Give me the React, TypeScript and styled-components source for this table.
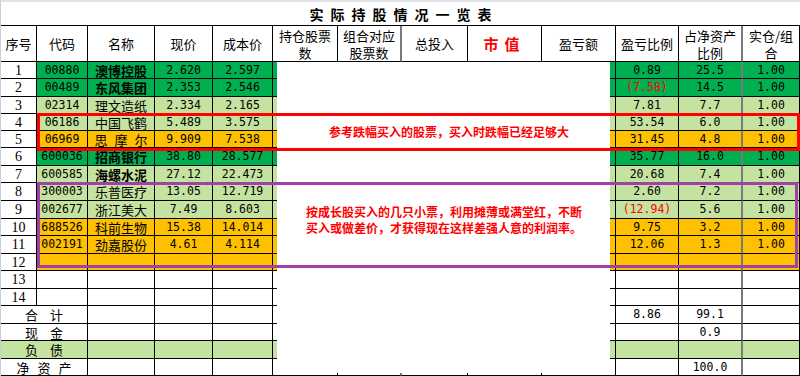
import styled, { createGlobalStyle } from 'styled-components';

const GREEN = '#00b050';
const LIGHT = '#c4e3a0';
const GOLD = '#ffc000';
const CJK = `"Noto Sans CJK SC", "Noto Sans", sans-serif`;
const NUM = `"DejaVu Sans Mono", "Liberation Mono", monospace`;

type Fill = 'dark' | 'light' | 'gold' | 'none';
type Face = 'cjk' | 'num' | 'serif';

const fillColor = (f?: Fill) =>
  f === 'dark' ? GREEN : f === 'light' ? LIGHT : f === 'gold' ? GOLD : '#fff';

const COLS = [36, 51, 67, 58, 60, 65, 64, 66, 74, 74, 63, 64, 57];
const ROWS = [17, 18, 17, 17, 17, 18, 17, 18, 18, 17, 18, 17, 18, 17, 18, 17, 18, 17];
// columns whose right edge is drawn as a thick grey rule
const THICK = [6, 11];

interface Stock {
  no: number;
  code?: string;
  name?: string;
  bold?: boolean;
  spaced?: boolean;
  price?: string;
  cost?: string;
  pct?: string;
  loss?: boolean;
  share?: string;
  ratio?: string;
  fill: Fill;
}

const stocks: Stock[] = [
  { no: 1, code: '00880', name: '澳博控股', bold: true, price: '2.620', cost: '2.597', pct: '0.89', share: '25.5', ratio: '1.00', fill: 'dark' },
  { no: 2, code: '00489', name: '东风集团', bold: true, price: '2.353', cost: '2.546', pct: '(7.58)', loss: true, share: '14.5', ratio: '1.00', fill: 'dark' },
  { no: 3, code: '02314', name: '理文造纸', price: '2.334', cost: '2.165', pct: '7.81', share: '7.7', ratio: '1.00', fill: 'light' },
  { no: 4, code: '06186', name: '中国飞鹤', price: '5.489', cost: '3.575', pct: '53.54', share: '6.0', ratio: '1.00', fill: 'light' },
  { no: 5, code: '06969', name: '思摩尔', spaced: true, price: '9.909', cost: '7.538', pct: '31.45', share: '4.8', ratio: '1.00', fill: 'gold' },
  { no: 6, code: '600036', name: '招商银行', bold: true, price: '38.80', cost: '28.577', pct: '35.77', share: '16.0', ratio: '1.00', fill: 'dark' },
  { no: 7, code: '600585', name: '海螺水泥', bold: true, price: '27.12', cost: '22.473', pct: '20.68', share: '7.4', ratio: '1.00', fill: 'light' },
  { no: 8, code: '300003', name: '乐普医疗', price: '13.05', cost: '12.719', pct: '2.60', share: '7.2', ratio: '1.00', fill: 'light' },
  { no: 9, code: '002677', name: '浙江美大', price: '7.49', cost: '8.603', pct: '(12.94)', loss: true, share: '5.6', ratio: '1.00', fill: 'light' },
  { no: 10, code: '688526', name: '科前生物', price: '15.38', cost: '14.014', pct: '9.75', share: '3.2', ratio: '1.00', fill: 'gold' },
  { no: 11, code: '002191', name: '劲嘉股份', price: '4.61', cost: '4.114', pct: '12.06', share: '1.3', ratio: '1.00', fill: 'gold' },
  { no: 12, fill: 'gold' },
  { no: 13, fill: 'none' },
  { no: 14, fill: 'none' },
];

const totals = [
  { label: '合计', spacing: 12, pct: '8.86', share: '99.1', fill: 'none' as Fill },
  { label: '现金', spacing: 12, share: '0.9', fill: 'none' as Fill },
  { label: '负债', spacing: 12, fill: 'light' as Fill },
  { label: '净资产', spacing: 8, share: '100.0', fill: 'none' as Fill },
];

const GlobalStyle = createGlobalStyle`
  html, body {
    margin: 0;
    padding: 0;
    background: #fff;
  }
`;

const Sheet = styled.div`
  position: relative;
  width: 800px;
  height: 376px;
  overflow: hidden;
  box-sizing: border-box;
  border-top: 2px solid #dde1e9;
  border-left: 1px solid #c9ced8;
  background: #fff;
`;

const Title = styled.div`
  height: 23px;
  display: flex;
  align-items: center;
  justify-content: center;
  padding-left: 7px;
  font-family: ${CJK};
  font-size: 14px;
  font-weight: 700;
  letter-spacing: 7px;
  color: #000;
`;

const Grid = styled.div`
  display: grid;
  grid-template-columns: ${COLS.map((c) => `${c}px`).join(' ')};
  grid-template-rows: 36px ${ROWS.map((r) => `${r}px`).join(' ')};
  border-top: 1px solid #000;
`;

const Cell = styled.div<{
  $fill?: Fill;
  $face?: Face;
  $bold?: boolean;
  $red?: boolean;
  $span?: number;
  $thick?: boolean;
  $spacing?: number;
  $size?: number;
}>`
  box-sizing: border-box;
  display: flex;
  align-items: center;
  justify-content: center;
  text-align: center;
  overflow: hidden;
  white-space: nowrap;
  grid-column: span ${(p) => p.$span ?? 1};
  background: ${(p) => fillColor(p.$fill)};
  border-bottom: 1px solid #000;
  border-right: ${(p) => (p.$thick ? '2px solid #7a7a7a' : '1px solid #000')};
  color: ${(p) => (p.$red ? '#ff0000' : '#000')};
  font-family: ${(p) => (p.$face === 'num' ? NUM : p.$face === 'serif' ? `"Liberation Serif", serif` : CJK)};
  font-size: ${(p) => p.$size ?? (p.$face === 'num' ? 11.5 : p.$face === 'serif' ? 14 : 13)}px;
  font-weight: ${(p) => (p.$bold ? 700 : 400)};
  letter-spacing: ${(p) => p.$spacing ?? 0}px;
  padding-left: ${(p) => p.$spacing ?? 0}px;
  line-height: 15px;
`;

const HeadCell = styled(Cell)`
  white-space: normal;
  line-height: 17px;
  padding: 0 1px;
`;

const WhitePanel = styled.div`
  position: absolute;
  left: 276px;
  top: 60px;
  width: 333px;
  height: 311px;
  background: #fff;
`;

const Callout = styled.div<{ $color: string; $pad: number; $lift: number }>`
  position: absolute;
  box-sizing: border-box;
  border: 3px solid ${(p) => p.$color};
  display: flex;
  flex-direction: column;
  justify-content: center;
  padding: 0 0 ${(p) => p.$lift}px ${(p) => p.$pad}px;
  font-family: ${CJK};
  font-size: 12px;
  font-weight: 700;
  color: #ff0000;
  white-space: nowrap;
`;

const CalloutLine = styled.div`
  height: 16px;
  line-height: 16px;
`;

const RedBox = styled(Callout)`
  left: 36px;
  top: 111px;
  width: 763px;
  height: 38px;
`;

const PurpleBox = styled(Callout)`
  left: 36px;
  top: 180px;
  width: 761px;
  height: 86px;
`;

const headers: { text: React.ReactNode; red?: boolean }[] = [
  { text: '序号' },
  { text: '代码' },
  { text: '名称' },
  { text: '现价' },
  { text: '成本价' },
  { text: <>持仓股票<br />数</> },
  { text: <>组合对应<br />股票数</> },
  { text: '总投入' },
  { text: '市值', red: true },
  { text: '盈亏额' },
  { text: '盈亏比例' },
  { text: <>占净资产<br />比例</> },
  { text: <>实仓/组<br />合</> },
];

const StockRow = ({ s }: { s: Stock }) => {
  const f = s.fill;
  return (
    <>
      <Cell $face="serif">{s.no}</Cell>
      <Cell $fill={f} $face="num">{s.code}</Cell>
      <Cell $fill={f} $bold={s.bold} $spacing={s.spaced ? 7 : 0}>
        {s.name}
      </Cell>
      <Cell $fill={f} $face="num">{s.price}</Cell>
      <Cell $fill={f} $face="num">{s.cost}</Cell>
      <Cell $fill={f} />
      <Cell $fill={f} $thick />
      <Cell $fill={f} />
      <Cell $fill={f} />
      <Cell $fill={f} />
      <Cell $fill={f} $face="num" $red={s.loss}>{s.pct}</Cell>
      <Cell $fill={f} $face="num" $thick>{s.share}</Cell>
      <Cell $fill={f} $face="num">{s.ratio}</Cell>
    </>
  );
};

const TotalRow = ({ t }: { t: (typeof totals)[number] }) => {
  const f = t.fill;
  return (
    <>
      <Cell $span={2} $fill={f} $spacing={t.spacing}>{t.label}</Cell>
      <Cell $fill={f} />
      <Cell $fill={f} />
      <Cell $fill={f} />
      <Cell $fill={f} />
      <Cell $fill={f} $thick />
      <Cell $fill={f} />
      <Cell $fill={f} />
      <Cell $fill={f} />
      <Cell $fill={f} $face="num">{t.pct}</Cell>
      <Cell $fill={f} $face="num" $thick>{t.share}</Cell>
      <Cell $fill={f} />
    </>
  );
};

export default function App() {
  return (
    <>
      <GlobalStyle />
      <Sheet>
        <Title>实际持股情况一览表</Title>
        <Grid>
          {headers.map((h, i) => (
            <HeadCell
              key={i}
              $red={h.red}
              $bold={h.red}
              $size={h.red ? 15 : 13}
              $spacing={h.red ? 6 : 0}
              $thick={THICK.includes(i)}
            >
              {h.text}
            </HeadCell>
          ))}
          {stocks.map((s) => (
            <StockRow key={s.no} s={s} />
          ))}
          {totals.map((t) => (
            <TotalRow key={t.label} t={t} />
          ))}
        </Grid>

        <WhitePanel />
        <RedBox $color="#ff0000" $pad={289} $lift={0}>
          <CalloutLine>参考跌幅买入的股票，买入时跌幅已经足够大</CalloutLine>
        </RedBox>
        <PurpleBox $color="#a040a8" $pad={266} $lift={10}>
          <CalloutLine>按成长股买入的几只小票，利用摊薄或满堂红，不断</CalloutLine>
          <CalloutLine>买入或做差价，才获得现在这样差强人意的利润率。</CalloutLine>
        </PurpleBox>
      </Sheet>
    </>
  );
}
